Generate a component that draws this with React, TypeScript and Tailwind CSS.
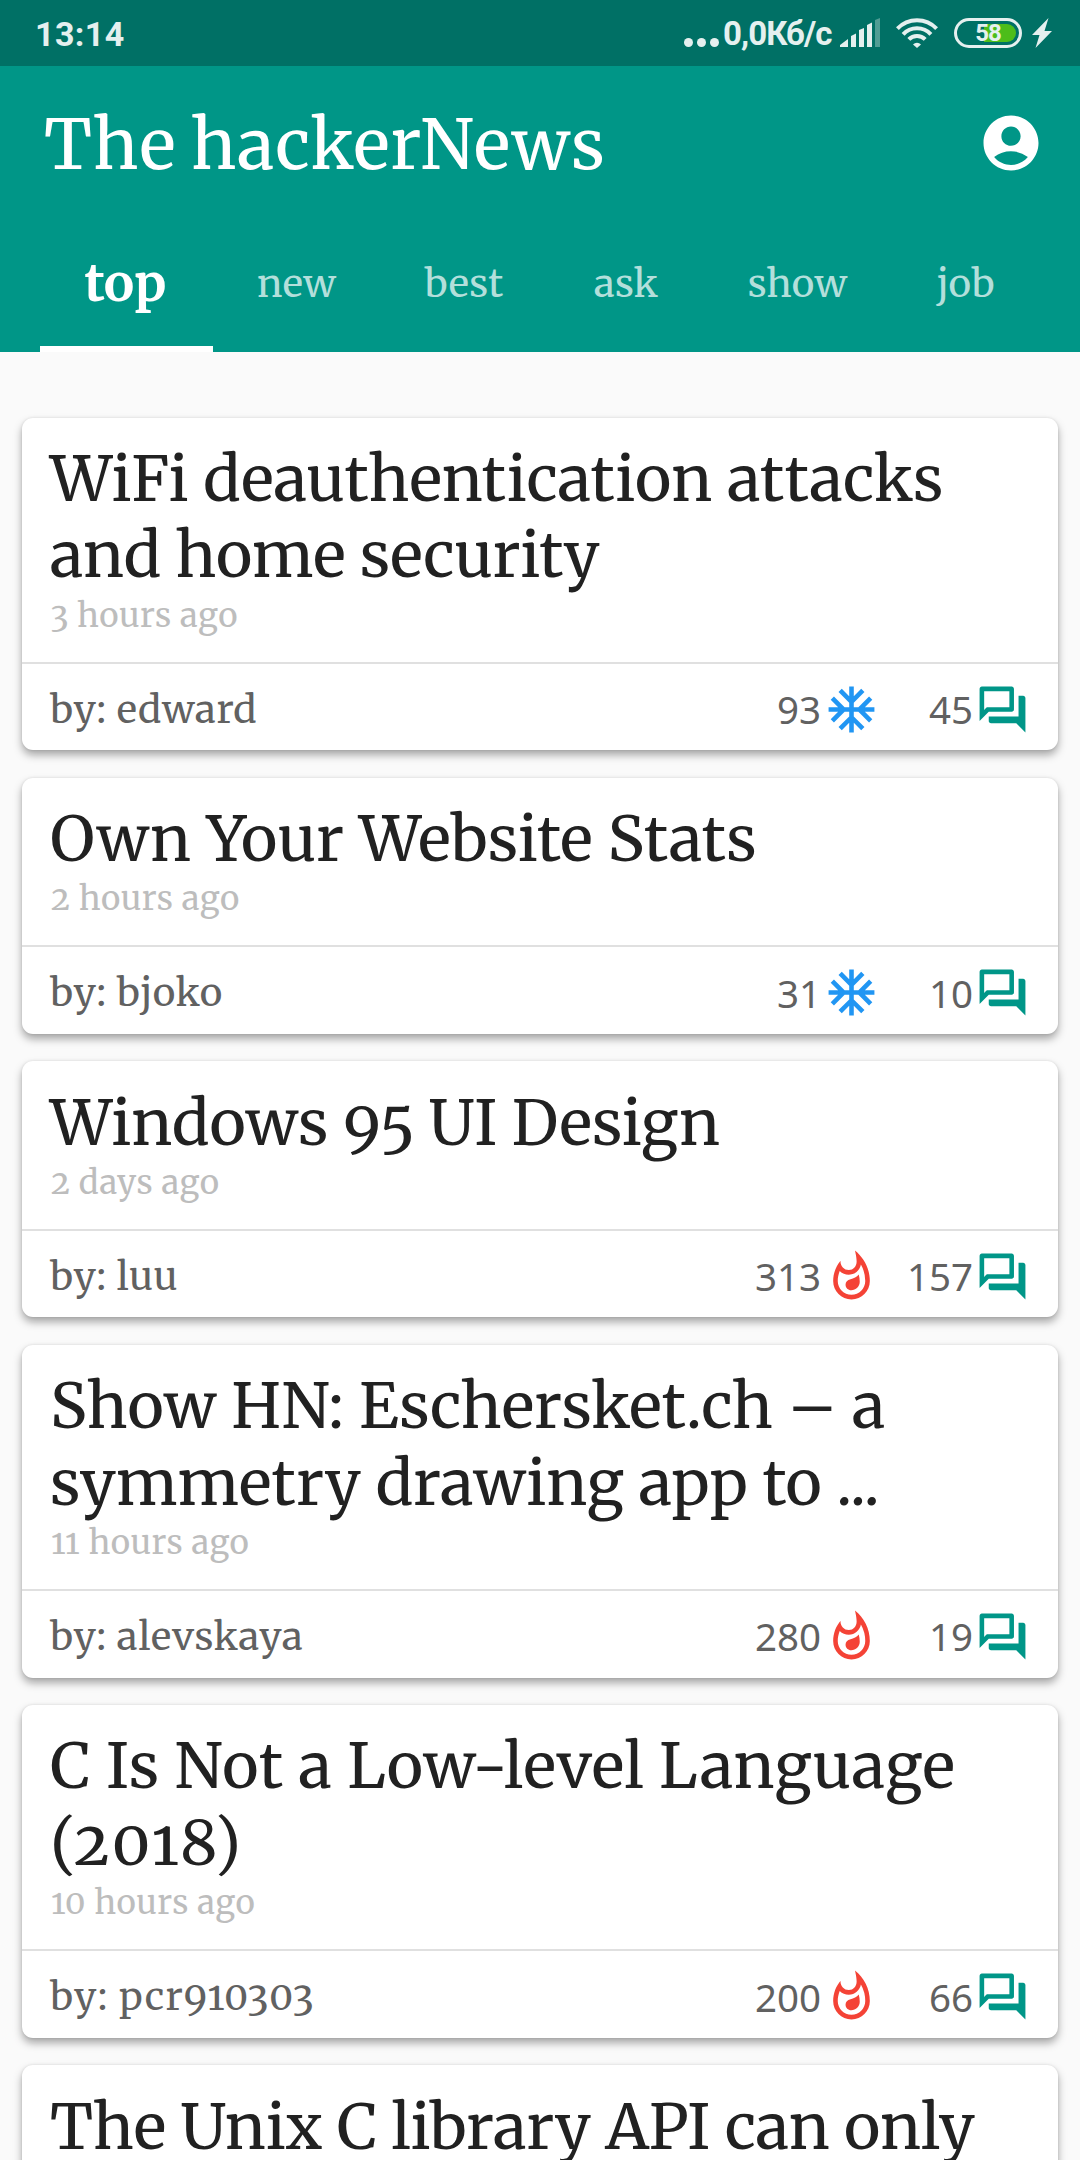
import { MdAcUnit, MdAccountCircle, MdOutlineQuestionAnswer, MdOutlineWhatshot } from "react-icons/md";

type Line = { text: string; tracking: string };

type Story = {
  title: Line[];
  age: string;
  author: string;
  authorTracking?: string;
  points: number;
  comments: number;
  hot: boolean;
};

const stories: Story[] = [
  {
    title: [
      { text: "WiFi deauthentication attacks", tracking: "tracking-[0.08px]" },
      { text: "and home security", tracking: "tracking-[-0.25px]" },
    ],
    age: "3 hours ago", author: "edward", points: 93, comments: 45, hot: false,
  },
  {
    title: [{ text: "Own Your Website Stats", tracking: "tracking-[0.15px]" }],
    age: "2 hours ago", author: "bjoko", points: 31, comments: 10, hot: false,
  },
  {
    title: [{ text: "Windows 95 UI Design", tracking: "tracking-[-0.2px]" }],
    age: "2 days ago", author: "luu", points: 313, comments: 157, hot: true,
  },
  {
    title: [
      { text: "Show HN: Eschersket.ch – a", tracking: "tracking-[0.16px]" },
      { text: "symmetry drawing app to ...", tracking: "tracking-normal" },
    ],
    age: "11 hours ago", author: "alevskaya", points: 280, comments: 19, hot: true,
  },
  {
    title: [
      { text: "C Is Not a Low-level Language", tracking: "tracking-[0.38px]" },
      { text: "(2018)", tracking: "tracking-[3px]" },
    ],
    age: "10 hours ago", author: "pcr910303", authorTracking: "tracking-[1.25px]", points: 200, comments: 66, hot: true,
  },
];

const tabs = [
  { label: "top", width: "w-[173px]" },
  { label: "new", width: "w-[167px]" },
  { label: "best", width: "w-[168px]" },
  { label: "ask", width: "w-[156px]" },
  { label: "show", width: "w-[187px]" },
  { label: "job", width: "w-[149px]" },
];

function StatusBar() {
  return (
    <div className="flex h-[66px] items-center bg-[#007065] pl-[35px] pr-[28px] font-[Roboto,sans-serif] font-bold normal-nums text-[#e5f0ef]">
      <span className="pt-px text-[34px] leading-[68px] tracking-[0.4px]">13:14</span>
      <span className="ml-auto mt-[19px] flex gap-[4px]">
        <i className="size-[9px] rounded-full bg-[#e5f0ef]" />
        <i className="size-[9px] rounded-full bg-[#e5f0ef]" />
        <i className="size-[9px] rounded-full bg-[#e5f0ef]" />
      </span>
      <span className="ml-[4px] w-[117px] whitespace-nowrap pt-[2px] text-[33px] leading-[66px] tracking-[-0.9px]">0,0Кб/с</span>
      <svg className="h-[30px] w-[40px]" viewBox="0 0 40 30" fill="#e5f0ef">
        <path d="M0 29 L0 27 L8 21 L8 29Z M11 29V18L16 15.5V29Z M19 29V12L24 10V29Z M27 29V7L32 4.5V29Z" />
        <path d="M35 29V2L40 0V29Z" opacity="0.35" />
      </svg>
      <svg className="ml-[16px] h-[30px] w-[42px]" viewBox="0 0 42 30" fill="none" stroke="#e5f0ef" strokeWidth="4">
        <path d="M1.4 10.6A27 27 0 0 1 40.6 10.6" />
        <path d="M7.1 16.3A19 19 0 0 1 34.9 16.3" />
        <path d="M12.8 21.4A11.5 11.5 0 0 1 29.2 21.4" />
        <path d="M21 30L17 26.6A5.4 5.4 0 0 1 25 26.6Z" fill="#e5f0ef" stroke="none" />
      </svg>
      <div className="ml-[16px] flex h-[30px] w-[68px] items-center justify-center rounded-full border-[3px] border-[#e5f0ef] p-[3px]">
        <div className="flex h-[18px] w-full items-center justify-center rounded-full bg-[linear-gradient(to_right,transparent_42%,#4dbd1a_42%)]">
          <span className="text-[24px] leading-[28px] tracking-[-1px]">58</span>
        </div>
      </div>
      <svg className="ml-[10px] h-[30px] w-[20px]" viewBox="0 0 20 30" fill="#e5f0ef">
        <path d="M16.5 0L0 17H7.5L3.5 30L20 13H12.5Z" />
      </svg>
    </div>
  );
}

function Header() {
  return (
    <header className="flex h-[286px] flex-col bg-[#009687]">
      <div className="flex h-[154px] items-center justify-between pl-[44px] pr-[36px] text-white">
        <h1 className="pt-[3px] text-[69px] leading-[154px] tracking-[0.9px] [word-spacing:-3px]">The hackerNews</h1>
        <MdAccountCircle className="size-[66px]" />
      </div>
      <nav className="flex h-[132px] pl-[40px]">
        {tabs.map((tab, i) => (
          <div
            key={tab.label}
            className={`${tab.width} flex justify-center text-center ${
              i === 0
                ? "border-b-[6px] border-white pr-[2px] text-[51px] font-bold leading-[127px] text-white"
                : "text-[38.5px] leading-[128px] tracking-[0.2px] text-[#b3dfdb]"
            }`}
          >
            {tab.label}
          </div>
        ))}
      </nav>
    </header>
  );
}

function Title({ lines }: { lines: Line[] }) {
  return (
    <h2 className="text-[62px] leading-[76.6px] text-[#212121]">
      {lines.map((line) => (
        <span key={line.text} className={`block whitespace-nowrap ${line.tracking}`}>
          {line.text}
        </span>
      ))}
    </h2>
  );
}

const card = "rounded-[11px] bg-white shadow-[0_5px_8px_rgba(0,0,0,0.34),0_0_3px_rgba(0,0,0,0.1)]";
const count = "font-['Noto_Sans',sans-serif] text-[38.5px] leading-[48px] normal-nums text-[#616161]";

function StoryCard({ story }: { story: Story }) {
  return (
    <article className={card}>
      <div className="px-[28px] pb-[26px] pt-[23.3px]">
        <Title lines={story.title} />
        <p className="ml-px mt-[0.7px] text-[33px] leading-[41px] tracking-[0.5px] text-[#bdbdbd]">{story.age}</p>
      </div>
      <div className="flex h-[88.5px] items-center border-t-2 border-[#e0e0e0] pl-[28px] pr-[28px] pt-[4px]">
        <span className={`pt-px text-[38.5px] leading-[48px] text-[#616161] ${story.authorTracking ?? "tracking-[0.7px]"}`}>
          by: {story.author}
        </span>
        <span className={`ml-auto ${count}`}>{story.points}</span>
        {story.hot ? (
          <MdOutlineWhatshot className="ml-[3px] size-[55px] text-[#f44336]" />
        ) : (
          <MdAcUnit className="ml-[3px] size-[55px] text-[#2196f3]" />
        )}
        <span className={`w-[94px] text-right ${count}`}>{story.comments}</span>
        <MdOutlineQuestionAnswer className="ml-[2px] size-[55px] text-[#009688]" />
      </div>
    </article>
  );
}

export default function App() {
  return (
    <div className="h-[2160px] w-[1080px] overflow-hidden bg-[#fafafa] font-[Merriweather,'Noto_Serif','DejaVu_Serif',serif] oldstyle-nums">
      <StatusBar />
      <Header />
      <main className="flex flex-col gap-[27.5px] px-[22px] pt-[65.6px]">
        {stories.map((story) => (
          <StoryCard key={story.author} story={story} />
        ))}
        <article className={`${card} h-[256px] px-[28px] pt-[23.3px]`}>
          <Title lines={[{ text: "The Unix C library API can only", tracking: "tracking-[-0.22px]" }]} />
        </article>
      </main>
    </div>
  );
}
